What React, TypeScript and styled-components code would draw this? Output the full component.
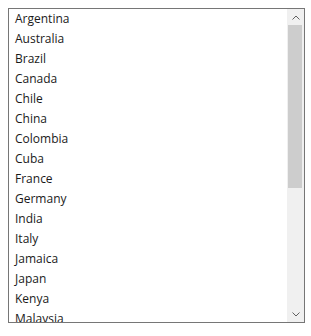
import * as React from "react";
import styled, { createGlobalStyle } from "styled-components";

const GlobalStyle = createGlobalStyle`
    html, body {
        margin: 0;
        background: #ffffff;
    }
    body {
        padding: 8px;
    }
`;

const countries = [
    "Argentina", "Australia", "Brazil", "Canada", "Chile", "China", "Colombia",
    "Cuba", "France", "Germany", "India", "Italy", "Jamaica", "Japan", "Kenya",
    "Malaysia", "Mexico", "Netherlands", "Nigeria", "Norway", "Peru", "Poland",
    "Russia", "Spain", "Sweden", "United Kingdom", "United States",
];

const ROW = 20;
const INNER = 313;

const ListBox = styled.div`
    display: flex;
    width: 295px;
    height: ${INNER}px;
    border: 1px solid #767676;
    background: #ffffff;
    font-family: "Open Sans", "Noto Sans", sans-serif;
    font-size: 12px;
    color: #1a1a1a;
`;

const Options = styled.ul`
    flex: 1;
    margin: 0;
    padding: 0;
    list-style: none;
    overflow: hidden;
`;

const Option = styled.li`
    height: ${ROW}px;
    line-height: ${ROW}px;
    padding-left: 6px;
    white-space: nowrap;
`;

const Scrollbar = styled.div`
    width: 17px;
    display: flex;
    flex-direction: column;
    background: #f0f0f0;
`;

const ArrowButton = styled.div`
    height: 16px;
    display: flex;
    align-items: center;
    justify-content: center;
    flex: none;
`;

const Track = styled.div`
    flex: 1;
    padding: 0 2px 0 1px;
`;

const Thumb = styled.div`
    background: #cdcdcd;
`;

function Chevron({ up }: { up?: boolean }) {
    return (
        <svg width="8" height="5" viewBox="0 0 8 5">
            <path
                d={up ? "M0.5 4.5 L4 1 L7.5 4.5" : "M0.5 0.5 L4 4 L7.5 0.5"}
                fill="none"
                stroke="#606060"
                strokeWidth="1"
            />
        </svg>
    );
}

export default function App() {
    const trackHeight = INNER - 32;
    const thumb = Math.round(trackHeight * INNER / (countries.length * ROW));
    return (
        <>
            <GlobalStyle />
            <ListBox>
                <Options>
                    {countries.map(c => <Option key={c}>{c}</Option>)}
                </Options>
                <Scrollbar>
                    <ArrowButton><Chevron up /></ArrowButton>
                    <Track>
                        <Thumb style={{ height: `${thumb}px` }} />
                    </Track>
                    <ArrowButton><Chevron /></ArrowButton>
                </Scrollbar>
            </ListBox>
        </>
    );
}
